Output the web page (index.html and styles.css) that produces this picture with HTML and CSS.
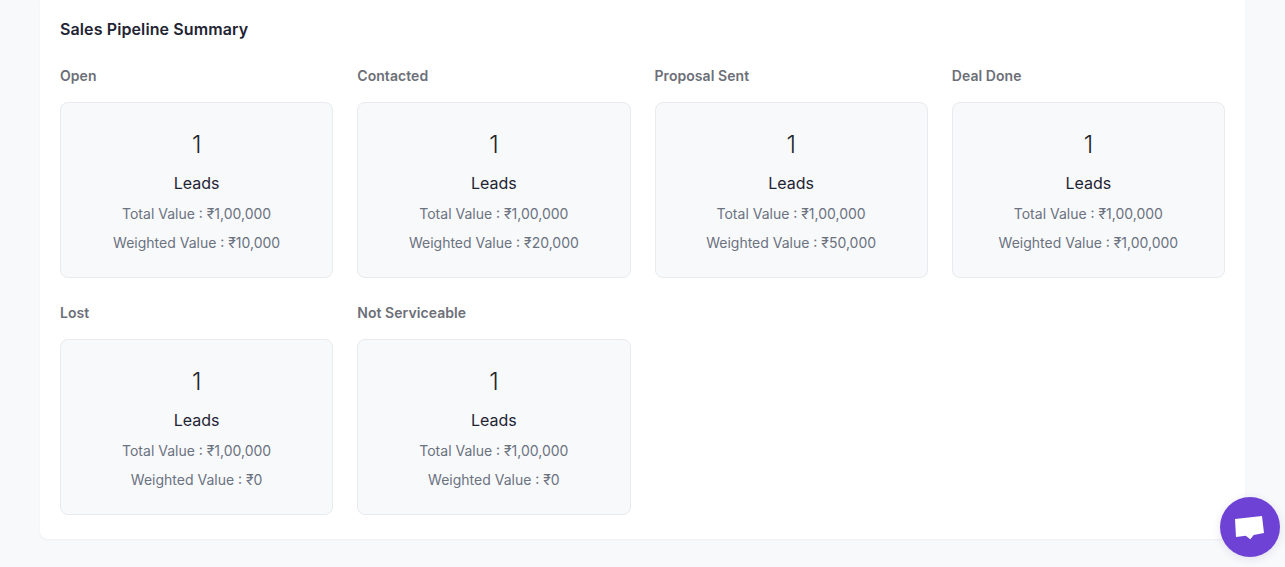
FILE: index.html
```html
<!DOCTYPE html>
<html lang="en">
<head>
    <meta charset="UTF-8">
    <meta name="viewport" content="width=device-width, initial-scale=1.0">
    <title>Sales Pipeline Summary</title>
    <link rel="stylesheet" href="styles.css">
</head>
<body>

    <div class="panel">
        <h2 class="panel-title">Sales Pipeline Summary</h2>

        <div class="pipeline">
            <div class="stage">
                <h3 class="stage-name">Open</h3>
                <div class="stage-card">
                    <div class="count">1</div>
                    <div class="count-label">Leads</div>
                    <p class="value">Total Value : ₹1,00,000</p>
                    <p class="value">Weighted Value : ₹10,000</p>
                </div>
            </div>
            <div class="stage">
                <h3 class="stage-name">Contacted</h3>
                <div class="stage-card">
                    <div class="count">1</div>
                    <div class="count-label">Leads</div>
                    <p class="value">Total Value : ₹1,00,000</p>
                    <p class="value">Weighted Value : ₹20,000</p>
                </div>
            </div>
            <div class="stage">
                <h3 class="stage-name">Proposal Sent</h3>
                <div class="stage-card">
                    <div class="count">1</div>
                    <div class="count-label">Leads</div>
                    <p class="value">Total Value : ₹1,00,000</p>
                    <p class="value">Weighted Value : ₹50,000</p>
                </div>
            </div>
            <div class="stage">
                <h3 class="stage-name">Deal Done</h3>
                <div class="stage-card">
                    <div class="count">1</div>
                    <div class="count-label">Leads</div>
                    <p class="value">Total Value : ₹1,00,000</p>
                    <p class="value">Weighted Value : ₹1,00,000</p>
                </div>
            </div>
            <div class="stage">
                <h3 class="stage-name">Lost</h3>
                <div class="stage-card">
                    <div class="count">1</div>
                    <div class="count-label">Leads</div>
                    <p class="value">Total Value : ₹1,00,000</p>
                    <p class="value">Weighted Value : ₹0</p>
                </div>
            </div>
            <div class="stage">
                <h3 class="stage-name">Not Serviceable</h3>
                <div class="stage-card">
                    <div class="count">1</div>
                    <div class="count-label">Leads</div>
                    <p class="value">Total Value : ₹1,00,000</p>
                    <p class="value">Weighted Value : ₹0</p>
                </div>
            </div>
        </div>
    </div>

    <button class="chat-button" aria-label="Chat">
        <svg width="36" height="28" viewBox="0 0 36 28">
            <path d="M3 6 L30 3 L32 20 L21.7 22 L18.3 26.3 L13.7 22.7 L4 24 Z" fill="#ffffff"/>
        </svg>
    </button>

</body>
</html>
```

FILE: styles.css
```css
body {
    font-family: Inter, "Noto Sans", sans-serif;
    background-color: #f8f9fb;
    color: #1f2433;
    margin: 0;
    padding: 0 40px 27px;
    height: 567px;
    box-sizing: border-box;
    overflow: hidden;
}

.panel {
    width: 1205px;
    height: 539px;
    box-sizing: border-box;
    padding: 21px 20px 0;
    background-color: #ffffff;
    border-radius: 0 0 8px 8px;
    box-shadow: 0 1px 2px rgba(20, 30, 50, 0.05);
}

.panel-title {
    margin: 0 0 29px;
    font-size: 16px;
    line-height: 17px;
    font-weight: 600;
    letter-spacing: 0.11px;
    color: #1f2433;
}

.pipeline {
    display: grid;
    grid-template-columns: repeat(4, 1fr);
    column-gap: 24px;
    row-gap: 26px;
}

.stage-name {
    margin: 0 0 18px;
    font-size: 14px;
    line-height: 17px;
    font-weight: 600;
    letter-spacing: 0.06px;
    color: #6c6f78;
}

.stage-card {
    height: 176px;
    box-sizing: border-box;
    padding-top: 27px;
    background-color: #f8f9fb;
    border: 1px solid #e8eaee;
    border-radius: 8px;
    text-align: center;
}

.count {
    font-size: 24px;
    line-height: 29px;
    font-weight: 300;
    color: #212529;
}

.count-label {
    margin-top: 15px;
    font-size: 16px;
    line-height: 19px;
    color: #1f2433;
}

.value {
    margin: 11px 0 0;
    font-size: 14px;
    line-height: 18px;
    color: #6b7280;
}

.count-label + .value {
    margin-top: 12px;
}

.chat-button {
    position: fixed;
    left: 1220px;
    top: 497px;
    width: 60px;
    height: 60px;
    padding: 0;
    border: none;
    border-radius: 50%;
    background-color: #6f42d6;
    box-shadow: 0 2px 8px rgba(60, 40, 120, 0.12);
    display: flex;
    align-items: center;
    justify-content: center;
}
```
